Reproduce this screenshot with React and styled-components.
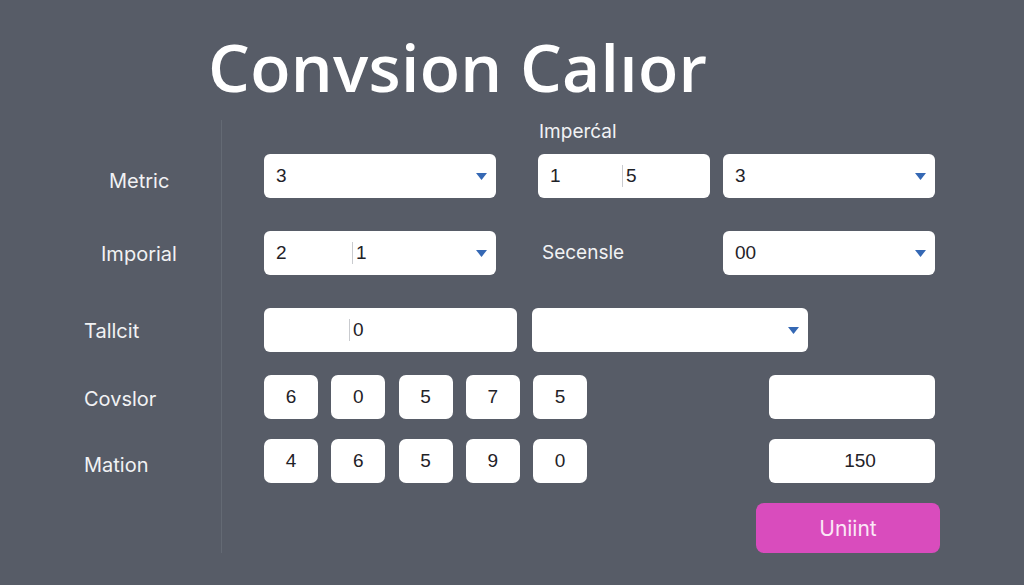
import React from "react";
import styled, { createGlobalStyle } from "styled-components";

const Global = createGlobalStyle`
  html, body {
    margin: 0;
    padding: 0;
    background: #575c67;
  }
  * { box-sizing: border-box; }
`;

const Page = styled.div`
  width: 1024px;
  height: 585px;
  background: #575c67;
  overflow: hidden;
  font-family: "Liberation Sans", Arial, sans-serif;
`;

const Title = styled.h1`
  margin: 0;
  padding: 28px 0 0 208px;
  height: 120px;
  font-family: "Open Sans", sans-serif;
  font-weight: 600;
  font-size: 66px;
  line-height: 76px;
  color: #ffffff;
  letter-spacing: 0.3px;
`;

const Body = styled.div`
  display: flex;
  flex-direction: column;
`;

const Row = styled.div`
  display: flex;
  align-items: stretch;
  height: ${(p) => p.h}px;
`;

const LabelCell = styled.div`
  width: 222px;
  flex: none;
  border-right: 1px solid ${(p) => (p.line ? "#646a74" : "transparent")};
  padding-left: ${(p) => p.indent || 84}px;
  padding-top: ${(p) => p.top || 0}px;
  font-family: "Inter", sans-serif;
  font-size: 20px;
  line-height: 44px;
  color: #f1f2f4;
`;

const Fields = styled.div`
  display: flex;
  align-items: flex-start;
  padding-left: 42px;
`;

const Box = styled.div`
  position: relative;
  width: ${(p) => p.w}px;
  height: 44px;
  margin-left: ${(p) => p.ml || 0}px;
  background: #ffffff;
  border-radius: 6px;
  display: flex;
  align-items: center;
  justify-content: ${(p) => (p.center ? "center" : "flex-start")};
  padding-left: ${(p) => (p.center ? 0 : 12)}px;
  font-size: 19px;
  color: #1f2227;
  flex: none;
`;

const Split = styled.span`
  display: inline-block;
  width: ${(p) => p.w}px;
`;

const Bar = styled.span`
  display: inline-block;
  width: 1px;
  height: 22px;
  background: #c9cbcf;
  margin-right: 3px;
`;

const Caret = styled.svg`
  position: absolute;
  right: 9px;
  top: 19px;
`;

const Key = styled(Box)`
  width: 54px;
  padding-left: 0;
  justify-content: center;
  border-radius: 7px;
`;

const SideLabel = styled.div`
  width: 181px;
  margin-left: 46px;
  font-family: "Inter", sans-serif;
  font-size: 19px;
  line-height: 44px;
  color: #f1f2f4;
  flex: none;
`;

const HeadLabel = styled.div`
  margin-left: 275px;
  padding-top: 1px;
  font-family: "Inter", sans-serif;
  font-size: 19px;
  line-height: 22px;
  color: #f1f2f4;
`;

const Button = styled.button`
  margin-left: 492px;
  width: 184px;
  height: 50px;
  border: 0;
  border-radius: 8px;
  background: #d94cbd;
  color: #fbe7f6;
  font-family: "Inter", sans-serif;
  font-size: 21px;
  cursor: pointer;
`;

const Arrow = () => (
  <Caret width="11" height="7" viewBox="0 0 11 7">
    <path d="M0 0 H11 L5.5 7 Z" fill="#3568b4" />
  </Caret>
);

const keysA = ["6", "0", "5", "7", "5"];
const keysB = ["4", "6", "5", "9", "0"];

const KeyRow = ({ keys }) =>
  keys.map((k, i) => (
    <Key key={i} w={54} ml={i === 0 ? 0 : 13.25}>
      {k}
    </Key>
  ));

export default function App() {
  return (
    <Page>
      <Global />
      <Title>Convsion Calıor</Title>
      <Body>
        <Row h={34}>
          <LabelCell line top={7} />
          <Fields>
            <HeadLabel>Imperćal</HeadLabel>
          </Fields>
        </Row>

        <Row h={77}>
          <LabelCell line indent={109} top={5}>
            Metric
          </LabelCell>
          <Fields>
            <Box w={232}>
              3
              <Arrow />
            </Box>
            <Box w={172} ml={42}>
              <Split w={72}>1</Split>
              <Bar />5
            </Box>
            <Box w={212} ml={13}>
              3
              <Arrow />
            </Box>
          </Fields>
        </Row>

        <Row h={77}>
          <LabelCell line indent={101} top={1}>
            Imporial
          </LabelCell>
          <Fields>
            <Box w={232}>
              <Split w={76}>2</Split>
              <Bar />1
              <Arrow />
            </Box>
            <SideLabel>Secensle</SideLabel>
            <Box w={212}>
              00
              <Arrow />
            </Box>
          </Fields>
        </Row>

        <Row h={67}>
          <LabelCell line top={1}>
            Tallcit
          </LabelCell>
          <Fields>
            <Box w={253}>
              <Split w={73} />
              <Bar />0
            </Box>
            <Box w={276} ml={15}>
              <Arrow />
            </Box>
          </Fields>
        </Row>

        <Row h={64}>
          <LabelCell line top={2}>
            Covslor
          </LabelCell>
          <Fields>
            <KeyRow keys={keysA} />
            <Box w={166} ml={182} />
          </Fields>
        </Row>

        <Row h={64}>
          <LabelCell line top={4}>
            Mation
          </LabelCell>
          <Fields>
            <KeyRow keys={keysB} />
            <Box w={166} ml={182} center>
              <span style={{ marginLeft: 16 }}>150</span>
            </Box>
          </Fields>
        </Row>

        <Row h={50}>
          <LabelCell line />
          <Fields>
            <Button>Uniint</Button>
          </Fields>
        </Row>
      </Body>
    </Page>
  );
}
